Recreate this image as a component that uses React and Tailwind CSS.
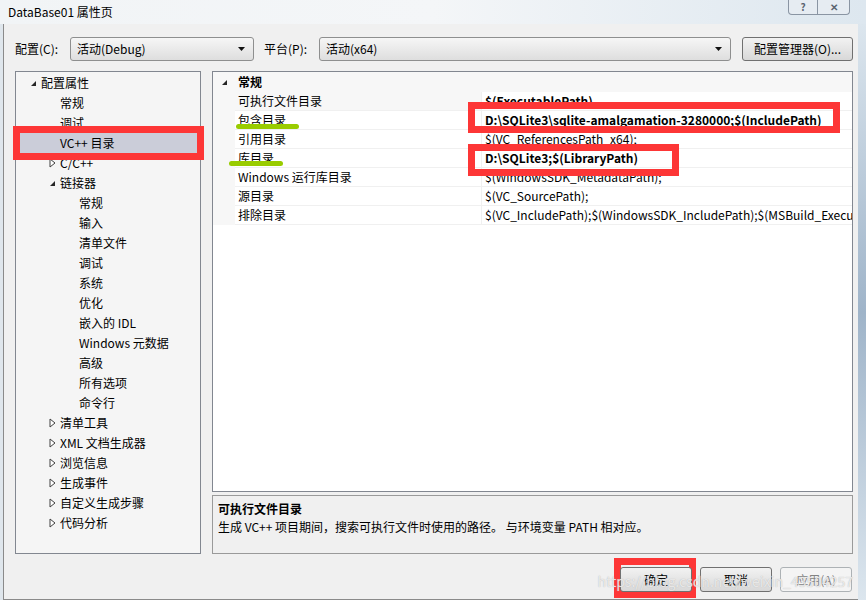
import { useState } from "react";

const font = { fontFamily: '"Noto Sans CJK SC", "Noto Sans", sans-serif' };

const tree = [
  { label: "配置属性", level: 0, arrow: "open" },
  { label: "常规", level: 1 },
  { label: "调试", level: 1 },
  { label: "VC++ 目录", level: 1, selected: true },
  { label: "C/C++", level: 1, arrow: "closed" },
  { label: "链接器", level: 1, arrow: "open" },
  { label: "常规", level: 2 },
  { label: "输入", level: 2 },
  { label: "清单文件", level: 2 },
  { label: "调试", level: 2 },
  { label: "系统", level: 2 },
  { label: "优化", level: 2 },
  { label: "嵌入的 IDL", level: 2 },
  { label: "Windows 元数据", level: 2 },
  { label: "高级", level: 2 },
  { label: "所有选项", level: 2 },
  { label: "命令行", level: 2 },
  { label: "清单工具", level: 1, arrow: "closed" },
  { label: "XML 文档生成器", level: 1, arrow: "closed" },
  { label: "浏览信息", level: 1, arrow: "closed" },
  { label: "生成事件", level: 1, arrow: "closed" },
  { label: "自定义生成步骤", level: 1, arrow: "closed" },
  { label: "代码分析", level: 1, arrow: "closed" },
];

const rows = [
  { name: "可执行文件目录", value: "$(ExecutablePath)", bold: true, first: true },
  { name: "包含目录", value: "D:\\SQLite3\\sqlite-amalgamation-3280000;$(IncludePath)", bold: true, mark: "wide" },
  { name: "引用目录", value: "$(VC_ReferencesPath_x64);" },
  { name: "库目录", value: "D:\\SQLite3;$(LibraryPath)", bold: true, mark: "short" },
  { name: "Windows 运行库目录", value: "$(WindowsSDK_MetadataPath);" },
  { name: "源目录", value: "$(VC_SourcePath);" },
  { name: "排除目录", value: "$(VC_IncludePath);$(WindowsSDK_IncludePath);$(MSBuild_ExecutablePath);$(VC_LibraryPath_x64);" },
];

const Arrow = ({ type }) =>
  type === "open" ? (
    <svg width="7" height="7" viewBox="0 0 7 7">
      <path d="M6 1 L6 6 L1 6 Z" fill="#262626" />
    </svg>
  ) : (
    <svg width="7" height="10" viewBox="0 0 7 10">
      <path d="M1 1 L6 5 L1 9 Z" fill="#fff" stroke="#404040" strokeWidth="1" />
    </svg>
  );

const Select = ({ value, className }) => (
  <div
    className={`h-[24px] shrink-0 flex items-center justify-between pl-[6px] pr-[8px] rounded-[3px] border border-[#8e8f8f] bg-gradient-to-b from-[#f6f6f6] to-[#dedede] text-[12px] text-black ${className}`}
  >
    <span>{value}</span>
    <svg width="7" height="4" viewBox="0 0 7 4">
      <path d="M0 0 L7 0 L3.5 4 Z" fill="#111" />
    </svg>
  </div>
);

const Button = ({ children, disabled }) => (
  <div
    className={`w-[72px] h-[25px] flex items-center justify-center rounded-[3px] border text-[12px] ${
      disabled
        ? "border-[#adb2b5] bg-[#f4f4f4] text-[#838383]"
        : "border-[#707070] bg-gradient-to-b from-[#f2f2f2] to-[#d8d8d8] text-black"
    }`}
  >
    {children}
  </div>
);

export default function App() {
  const [selected] = useState(3);

  return (
    <div className="w-[866px] h-[600px] flex flex-col bg-[#eef3f7] overflow-hidden" style={font}>
      {/* title bar */}
      <div className="h-[24px] flex items-start justify-between bg-gradient-to-r from-[#f1f4f6] via-[#f4f6f8] to-[#dde7ef]">
        <div className="pl-[8px] pt-[3px] text-[12px] text-black">DataBase01 属性页</div>
        <div className="flex mr-[16px]">
          <div className="w-[30px] h-[15px] flex items-center justify-center border border-t-0 border-[#8a95a3] rounded-bl-[4px] bg-[#e6ecf2] text-[10px] text-[#5a6470] font-bold leading-none">
            ?
          </div>
          <div className="w-[32px] h-[15px] flex items-center justify-center border border-t-0 border-l-0 border-[#8a95a3] rounded-br-[4px] bg-[#e6ecf2] text-[10px] text-[#5a6470] font-bold leading-none">
            ✕
          </div>
        </div>
      </div>

      <div className="flex-1 flex">
        <div className="w-[3px] bg-[#dfe6ec]" />
        {/* client area */}
        <div className="w-[855px] shrink-0 flex flex-col border-l border-b border-[#8a8a8a] bg-[#f0f0f0] pl-[11px] pr-[5px] pt-[13px]">
          {/* top row */}
          <div className="h-[24px] flex items-center text-[12px] text-black">
            <span className="w-[55px]">配置(C):</span>
            <Select value="活动(Debug)" className="w-[184px]" />
            <span className="ml-[10px] w-[55px]">平台(P):</span>
            <Select value="活动(x64)" className="w-[412px]" />
            <div className="ml-[11px] w-[111px] h-[24px] flex items-center justify-center rounded-[3px] border border-[#707070] bg-gradient-to-b from-[#f2f2f2] to-[#d8d8d8]">
              配置管理器(O)...
            </div>
          </div>

          {/* main area */}
          <div className="mt-[10px] flex gap-[11px] h-[483px]">
            {/* tree */}
            <div className="w-[186px] shrink-0 h-full border border-[#828790] bg-[#f5f5f5] pt-[1px] pl-[4px] pr-[3px] text-[12px] text-black">
              {tree.map((t, i) => (
                <div
                  key={i}
                  className={`h-[20px] flex items-center relative ${
                    i === selected ? "bg-[#cbcdd9] outline-[7px] outline-solid outline-[#fd3636] z-10" : ""
                  }`}
                >
                  <div
                    className={`shrink-0 flex items-center justify-center ${
                      t.level === 0 ? "w-[20px] ml-[3px]" : t.level === 1 ? "w-[20px] ml-[22px]" : "w-[20px] ml-[41px]"
                    }`}
                  >
                    {t.arrow && <Arrow type={t.arrow} />}
                  </div>
                  <span className="ml-[-2px] whitespace-nowrap">{t.label}</span>
                </div>
              ))}
            </div>

            {/* right column */}
            <div className="flex-1 min-w-0 flex flex-col gap-[3px]">
              <div className="h-[421px] border border-[#828790] bg-white text-[12px] text-black overflow-hidden">
                <div className="h-[20px] flex items-center bg-[#f7f7f7]">
                  <div className="w-[22px] flex justify-center">
                    <Arrow type="open" />
                  </div>
                  <span className="font-bold ml-[3px]">常规</span>
                </div>
                {rows.map((r, i) => (
                  <div key={i} className="h-[19px] flex bg-[#f7f7f7]">
                    <div
                      className={`w-[246px] shrink-0 ml-[22px] relative flex items-center pl-[3px] border-b border-[#f0f0f0] ${
                        r.first ? "bg-[#f7f7f7]" : "bg-white"
                      }`}
                    >
                      <span className="whitespace-nowrap">{r.name}</span>
                      {r.mark === "wide" && (
                        <div className="absolute left-[1px] top-[13px] w-[63px] h-[5px] rounded-full bg-[#99cc00]" />
                      )}
                      {r.mark === "short" && (
                        <div className="absolute left-[-6px] top-[12px] w-[54px] h-[5px] rounded-full bg-[#99cc00]" />
                      )}
                    </div>
                    <div className="flex-1 min-w-0 relative flex items-center pl-[3px] border-b border-l border-[#f0f0f0] bg-white">
                      <span className={`whitespace-nowrap ${r.bold ? "font-bold" : ""}`}>{r.value}</span>
                      {r.mark === "wide" && (
                        <div className="absolute left-[-14px] top-[-9px] w-[372px] h-[31px] border-[7px] border-[#fd3636] z-10" />
                      )}
                      {r.mark === "short" && (
                        <div className="absolute left-[-14px] top-[-5px] w-[211px] h-[32px] border-[7px] border-[#fd3636] z-10" />
                      )}
                    </div>
                  </div>
                ))}
              </div>
              <div className="h-[59px] border border-[#9a9a9a] bg-[#f0f0f0] px-[5px] pt-[4px] text-[12px] text-black">
                <div className="font-bold leading-[18px]">可执行文件目录</div>
                <div className="leading-[18px]">生成 VC++ 项目期间，搜索可执行文件时使用的路径。 与环境变量 PATH 相对应。</div>
              </div>
            </div>
          </div>

          {/* buttons */}
          <div className="mt-[13px] flex justify-end gap-[8px] pr-[1px] relative">
            <div className="relative">
              <div className="absolute left-[-6px] top-[-9px] w-[82px] h-[40px] border-[7px] border-[#fd3636]" />
              <div className="relative">
                <Button>确定</Button>
              </div>
            </div>
            <Button>取消</Button>
            <Button disabled>应用(A)</Button>
            <div className="absolute right-[0px] top-[4px] text-[14px] text-white/70 whitespace-nowrap pointer-events-none" style={{ textShadow: "0 0 1px #aaa" }}>
              https://blog.csdn.net/weixin_43504257
            </div>
          </div>
        </div>
        <div className="flex-1 bg-gradient-to-b from-[#dce6ee] via-[#9fb4c9] to-[#dce6ee]" />
      </div>
    </div>
  );
}
